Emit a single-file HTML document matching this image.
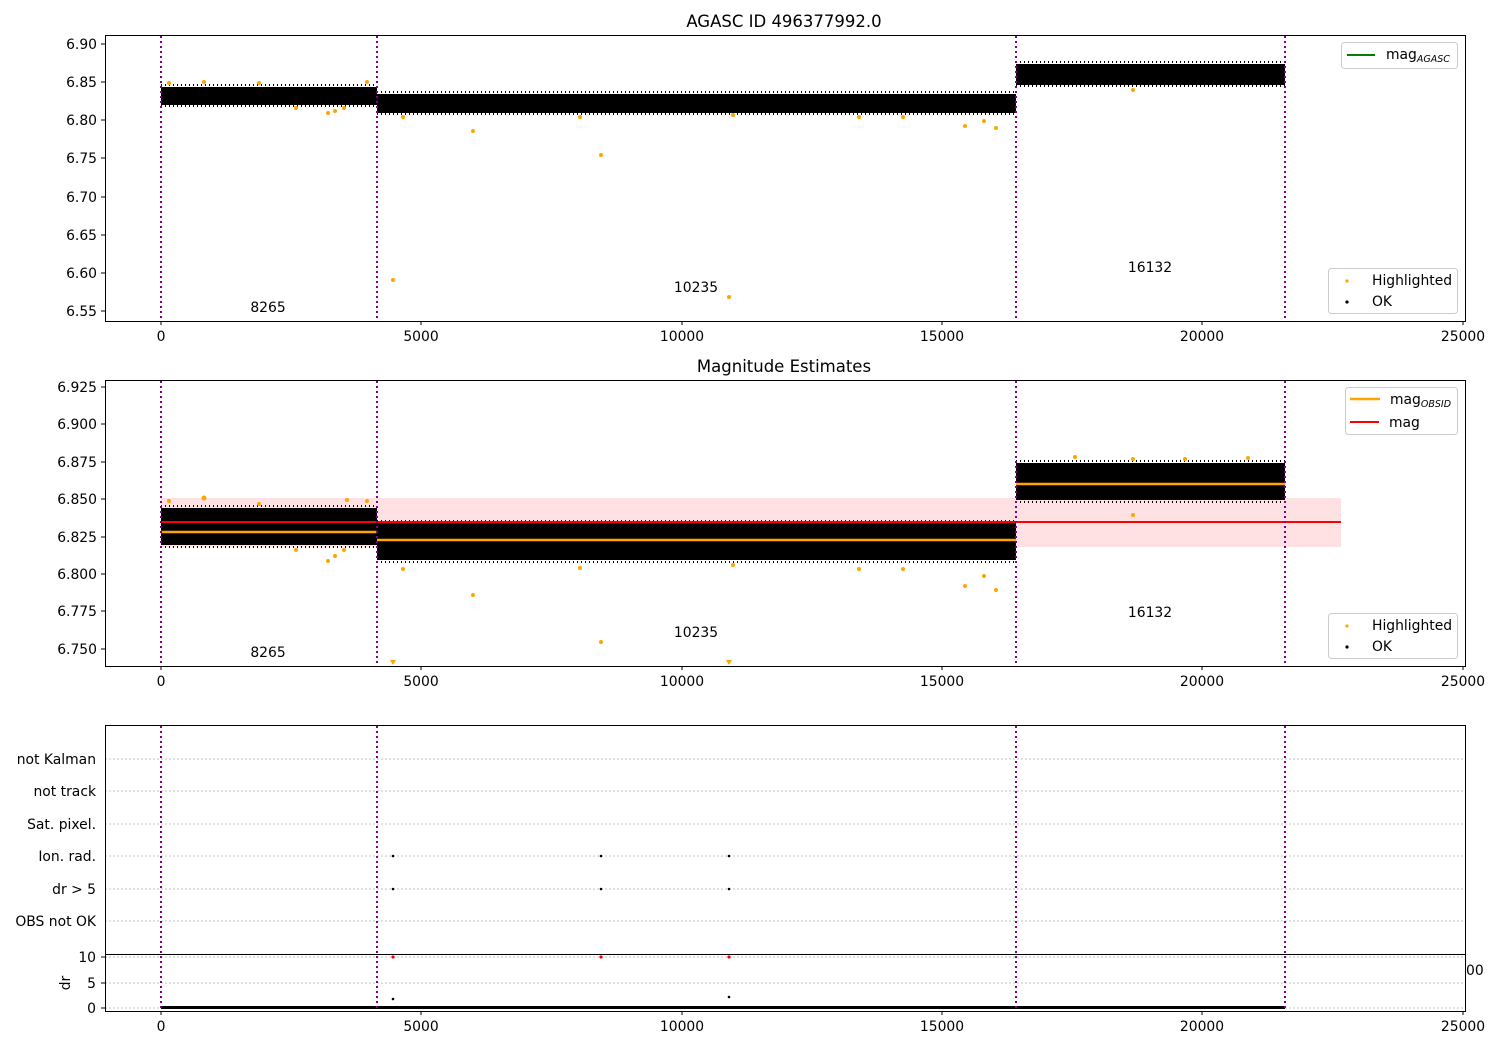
<!DOCTYPE html>
<html><head><meta charset="utf-8"><style>
html,body{margin:0;padding:0;background:#fff}
svg{display:block;font-family:"DejaVu Sans","Liberation Sans",sans-serif;font-size:13.9px}
</style></head><body>
<svg width="1500" height="1050" xmlns="http://www.w3.org/2000/svg">
<!-- ===== Axes 1 ===== -->
<text x="784" y="27" text-anchor="middle" font-size="16.5">AGASC ID 496377992.0</text>
<g fill="#000">
<rect x="161" y="87" width="216" height="18"/>
<rect x="377" y="94" width="639" height="19"/>
<rect x="1016" y="64" width="269" height="21"/>
</g>
<g stroke="#000" stroke-width="2" stroke-dasharray="1 3">
<line x1="161" y1="85" x2="377" y2="85"/><line x1="161" y1="106" x2="377" y2="106"/>
<line x1="377" y1="92" x2="1016" y2="92"/><line x1="377" y1="114" x2="1016" y2="114"/>
<line x1="1016" y1="62" x2="1285" y2="62"/><line x1="1016" y1="86" x2="1285" y2="86"/>
</g>
<g fill="orange">
<circle cx="169" cy="83" r="2"/><circle cx="204" cy="82" r="2"/><circle cx="259" cy="83" r="2"/><circle cx="296" cy="108" r="2"/><circle cx="328" cy="113" r="2"/><circle cx="335" cy="111" r="2"/><circle cx="344" cy="108" r="2"/><circle cx="367" cy="82" r="2"/>
<circle cx="403" cy="117" r="2"/><circle cx="473" cy="131" r="2"/><circle cx="580" cy="117" r="2"/><circle cx="601" cy="155" r="2"/><circle cx="733" cy="115" r="2"/><circle cx="859" cy="117" r="2"/><circle cx="903" cy="117" r="2"/><circle cx="965" cy="126" r="2"/><circle cx="984" cy="121" r="2"/><circle cx="996" cy="128" r="2"/>
<circle cx="393" cy="280" r="2"/><circle cx="729" cy="297" r="2"/><circle cx="1133" cy="90" r="2"/>
</g>
<g stroke="purple" stroke-width="2" stroke-dasharray="2 3">
<line x1="161" y1="36" x2="161" y2="321"/><line x1="377" y1="36" x2="377" y2="321"/><line x1="1016" y1="36" x2="1016" y2="321"/><line x1="1285" y1="36" x2="1285" y2="321"/>
</g>
<text x="268" y="312" text-anchor="middle">8265</text>
<text x="696" y="292" text-anchor="middle">10235</text>
<text x="1150" y="272" text-anchor="middle">16132</text>
<rect x="105.5" y="35.5" width="1360" height="286" fill="none" stroke="#000"/>
<g stroke="#000"><line x1="101" y1="44" x2="105" y2="44"/><line x1="101" y1="82" x2="105" y2="82"/><line x1="101" y1="120" x2="105" y2="120"/><line x1="101" y1="158" x2="105" y2="158"/><line x1="101" y1="197" x2="105" y2="197"/><line x1="101" y1="235" x2="105" y2="235"/><line x1="101" y1="273" x2="105" y2="273"/><line x1="101" y1="311" x2="105" y2="311"/>
<line x1="161" y1="321" x2="161" y2="325"/><line x1="421" y1="321" x2="421" y2="325"/><line x1="682" y1="321" x2="682" y2="325"/><line x1="942" y1="321" x2="942" y2="325"/><line x1="1202" y1="321" x2="1202" y2="325"/><line x1="1463" y1="321" x2="1463" y2="325"/></g>
<g text-anchor="end"><text x="97" y="49">6.90</text><text x="97" y="87">6.85</text><text x="97" y="125">6.80</text><text x="97" y="163">6.75</text><text x="97" y="202">6.70</text><text x="97" y="240">6.65</text><text x="97" y="278">6.60</text><text x="97" y="316">6.55</text></g>
<g text-anchor="middle"><text x="161" y="341">0</text><text x="421" y="341">5000</text><text x="682" y="341">10000</text><text x="942" y="341">15000</text><text x="1202" y="341">20000</text><text x="1463" y="341">25000</text></g>
<rect x="1341.5" y="42.5" width="116" height="26" rx="3" fill="#fff" fill-opacity="0.8" stroke="#ccc"/>
<line x1="1347" y1="55" x2="1375" y2="55" stroke="green" stroke-width="2"/>
<text x="1386" y="59">mag<tspan font-size="9.5" font-style="italic" dy="3">AGASC</tspan></text>
<rect x="1328.5" y="268.5" width="129" height="45" rx="3" fill="#fff" fill-opacity="0.8" stroke="#ccc"/>
<circle cx="1347" cy="281" r="1.6" fill="orange"/><text x="1372" y="285">Highlighted</text>
<circle cx="1347" cy="302" r="1.6" fill="#000"/><text x="1372" y="306">OK</text>

<!-- ===== Axes 2 ===== -->
<text x="784" y="372" text-anchor="middle" font-size="16.5">Magnitude Estimates</text>
<rect x="161" y="498" width="1180" height="49" fill="#ffe0e3"/>
<g fill="#000">
<rect x="161" y="508" width="216" height="37"/>
<rect x="377" y="523" width="639" height="37"/>
<rect x="1016" y="463" width="269" height="37"/>
</g>
<g stroke="#000" stroke-width="2" stroke-dasharray="1 3">
<line x1="161" y1="506" x2="377" y2="506"/><line x1="161" y1="547" x2="377" y2="547"/>
<line x1="377" y1="521" x2="1016" y2="521"/><line x1="377" y1="562" x2="1016" y2="562"/>
<line x1="1016" y1="461" x2="1285" y2="461"/><line x1="1016" y1="502" x2="1285" y2="502"/>
</g>
<line x1="161" y1="522" x2="1341" y2="522" stroke="red" stroke-width="2"/>
<g stroke="orange" stroke-width="2.5">
<line x1="161" y1="532" x2="377" y2="532"/><line x1="377" y1="540" x2="1016" y2="540"/><line x1="1016" y1="484" x2="1285" y2="484"/>
</g>
<g fill="orange">
<circle cx="169" cy="501" r="2"/><circle cx="204" cy="498" r="2.5"/><circle cx="259" cy="504" r="2"/><circle cx="296" cy="550" r="2"/><circle cx="328" cy="561" r="2"/><circle cx="335" cy="556" r="2"/><circle cx="344" cy="550" r="2"/><circle cx="347" cy="500" r="2"/><circle cx="367" cy="501" r="2"/>
<circle cx="403" cy="569" r="2"/><circle cx="473" cy="595" r="2"/><circle cx="580" cy="568" r="2"/><circle cx="601" cy="642" r="2"/><circle cx="733" cy="565" r="2"/><circle cx="859" cy="569" r="2"/><circle cx="903" cy="569" r="2"/><circle cx="965" cy="586" r="2"/><circle cx="984" cy="576" r="2"/><circle cx="996" cy="590" r="2"/>
<circle cx="1075" cy="457" r="2"/><circle cx="1133" cy="459" r="2"/><circle cx="1185" cy="459" r="2"/><circle cx="1248" cy="458" r="2"/><circle cx="1133" cy="515" r="2"/>
<polygon points="390,660 396,660 393,665"/><polygon points="726,660 732,660 729,665"/>
</g>
<g stroke="purple" stroke-width="2" stroke-dasharray="2 3">
<line x1="161" y1="381" x2="161" y2="666"/><line x1="377" y1="381" x2="377" y2="666"/><line x1="1016" y1="381" x2="1016" y2="666"/><line x1="1285" y1="381" x2="1285" y2="666"/>
</g>
<text x="268" y="657" text-anchor="middle">8265</text>
<text x="696" y="637" text-anchor="middle">10235</text>
<text x="1150" y="617" text-anchor="middle">16132</text>
<rect x="105.5" y="380.5" width="1360" height="286" fill="none" stroke="#000"/>
<g stroke="#000"><line x1="101" y1="387" x2="105" y2="387"/><line x1="101" y1="424" x2="105" y2="424"/><line x1="101" y1="462" x2="105" y2="462"/><line x1="101" y1="499" x2="105" y2="499"/><line x1="101" y1="537" x2="105" y2="537"/><line x1="101" y1="574" x2="105" y2="574"/><line x1="101" y1="611" x2="105" y2="611"/><line x1="101" y1="649" x2="105" y2="649"/>
<line x1="161" y1="666" x2="161" y2="670"/><line x1="421" y1="666" x2="421" y2="670"/><line x1="682" y1="666" x2="682" y2="670"/><line x1="942" y1="666" x2="942" y2="670"/><line x1="1202" y1="666" x2="1202" y2="670"/><line x1="1463" y1="666" x2="1463" y2="670"/></g>
<g text-anchor="end"><text x="97" y="392">6.925</text><text x="97" y="429">6.900</text><text x="97" y="467">6.875</text><text x="97" y="504">6.850</text><text x="97" y="542">6.825</text><text x="97" y="579">6.800</text><text x="97" y="616">6.775</text><text x="97" y="654">6.750</text></g>
<g text-anchor="middle"><text x="161" y="686">0</text><text x="421" y="686">5000</text><text x="682" y="686">10000</text><text x="942" y="686">15000</text><text x="1202" y="686">20000</text><text x="1463" y="686">25000</text></g>
<rect x="1345.5" y="387.5" width="112" height="47" rx="3" fill="#fff" fill-opacity="0.8" stroke="#ccc"/>
<line x1="1350" y1="399" x2="1380" y2="399" stroke="orange" stroke-width="2.5"/>
<text x="1390" y="404">mag<tspan font-size="9.5" font-style="italic" dy="3">OBSID</tspan></text>
<line x1="1350" y1="422" x2="1379" y2="422" stroke="red" stroke-width="2"/>
<text x="1389" y="427">mag</text>
<rect x="1328.5" y="613.5" width="129" height="45" rx="3" fill="#fff" fill-opacity="0.8" stroke="#ccc"/>
<circle cx="1347" cy="626" r="1.6" fill="orange"/><text x="1372" y="630">Highlighted</text>
<circle cx="1347" cy="647" r="1.6" fill="#000"/><text x="1372" y="651">OK</text>

<!-- ===== Axes 3 ===== -->
<g stroke="#b0b0b0" stroke-width="0.8" stroke-dasharray="2 2">
<line x1="105" y1="759" x2="1465" y2="759"/><line x1="105" y1="791" x2="1465" y2="791"/><line x1="105" y1="824" x2="1465" y2="824"/><line x1="105" y1="856" x2="1465" y2="856"/><line x1="105" y1="889" x2="1465" y2="889"/><line x1="105" y1="921" x2="1465" y2="921"/>
<line x1="105" y1="957" x2="1465" y2="957"/><line x1="105" y1="983" x2="1465" y2="983"/><line x1="105" y1="1008" x2="1465" y2="1008"/>
</g>
<g fill="#000"><circle cx="393" cy="856" r="1.3"/><circle cx="601" cy="856" r="1.3"/><circle cx="729" cy="856" r="1.3"/><circle cx="393" cy="889" r="1.3"/><circle cx="601" cy="889" r="1.3"/><circle cx="729" cy="889" r="1.3"/>
<circle cx="393" cy="999" r="1.3"/><circle cx="729" cy="997" r="1.3"/></g>
<g fill="red"><circle cx="393" cy="957" r="1.6"/><circle cx="601" cy="957" r="1.6"/><circle cx="729" cy="957" r="1.6"/></g>
<rect x="161" y="1006" width="1124" height="3" fill="#000"/>
<g stroke="purple" stroke-width="2" stroke-dasharray="2 3">
<line x1="161" y1="726" x2="161" y2="1011"/><line x1="377" y1="726" x2="377" y2="1011"/><line x1="1016" y1="726" x2="1016" y2="1011"/><line x1="1285" y1="726" x2="1285" y2="1011"/>
</g>
<rect x="105.5" y="725.5" width="1360" height="286" fill="none" stroke="#000"/>
<line x1="105" y1="954.5" x2="1465" y2="954.5" stroke="#000"/>
<g text-anchor="end"><text x="96" y="764">not Kalman</text><text x="96" y="796">not track</text><text x="96" y="829">Sat. pixel.</text><text x="96" y="861">Ion. rad.</text><text x="96" y="894">dr &gt; 5</text><text x="96" y="926">OBS not OK</text>
<text x="96" y="962">10</text><text x="96" y="988">5</text><text x="96" y="1013">0</text></g>
<text x="1466" y="975">00</text>
<text x="70" y="983" text-anchor="middle" transform="rotate(-90 70 983)">dr</text>
<g stroke="#000"><line x1="101" y1="957" x2="105" y2="957"/><line x1="101" y1="983" x2="105" y2="983"/><line x1="101" y1="1008" x2="105" y2="1008"/>
<line x1="161" y1="1011" x2="161" y2="1015"/><line x1="421" y1="1011" x2="421" y2="1015"/><line x1="682" y1="1011" x2="682" y2="1015"/><line x1="942" y1="1011" x2="942" y2="1015"/><line x1="1202" y1="1011" x2="1202" y2="1015"/><line x1="1463" y1="1011" x2="1463" y2="1015"/></g>
<g text-anchor="middle"><text x="161" y="1031">0</text><text x="421" y="1031">5000</text><text x="682" y="1031">10000</text><text x="942" y="1031">15000</text><text x="1202" y="1031">20000</text><text x="1463" y="1031">25000</text></g>
</svg>
</body></html>
